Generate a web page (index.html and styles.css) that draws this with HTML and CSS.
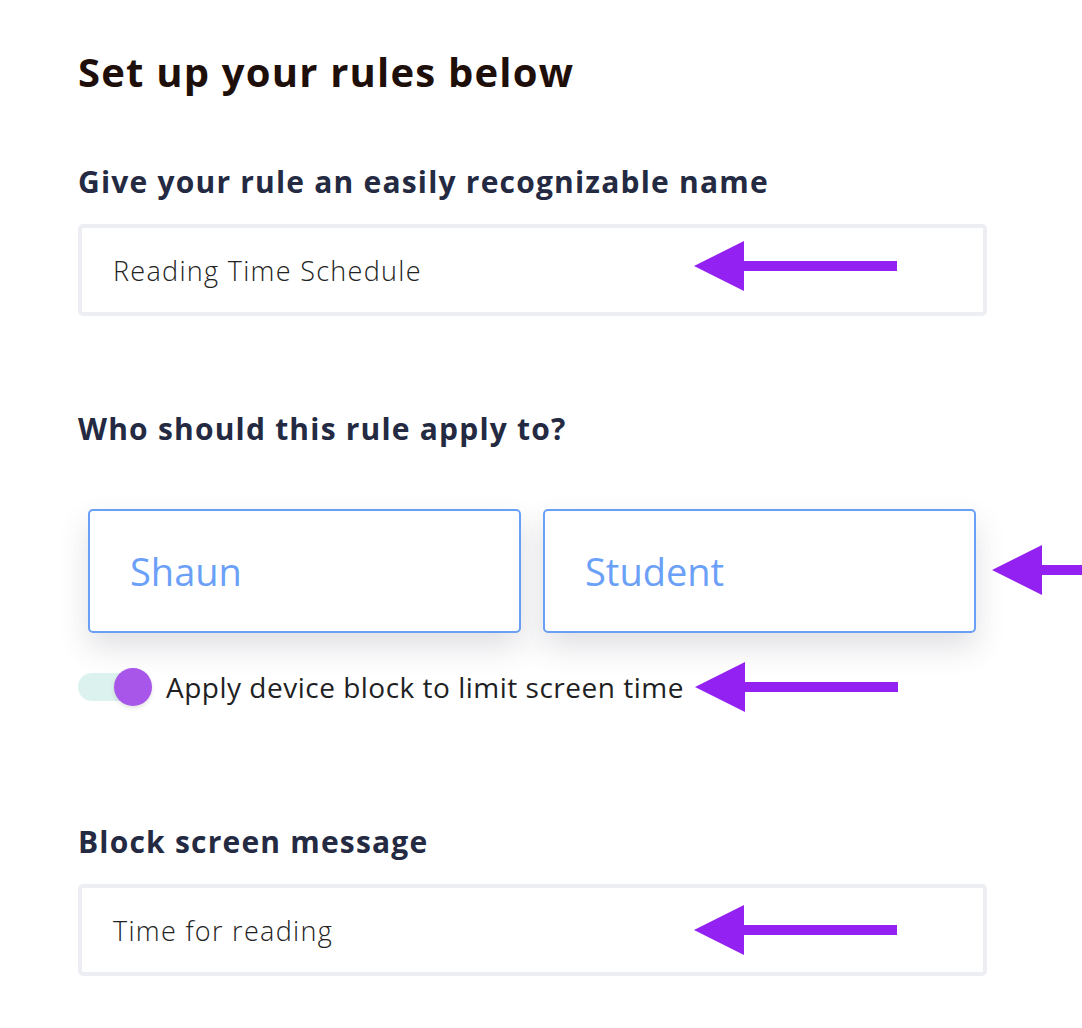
FILE: index.html
```html
<!DOCTYPE html>
<html lang="en">
<head>
<meta charset="utf-8">
<title>Rule setup</title>
<link rel="stylesheet" href="styles.css">
</head>
<body>
<main class="rules">
  <h1 class="rules__title">Set up your rules below</h1>

  <section class="field field--name">
    <h2 class="field__label">Give your rule an easily recognizable name</h2>
    <div class="field__box">
      <span class="field__value">Reading Time Schedule</span>
      <svg class="pointer pointer--name" viewBox="0 0 203 50" aria-hidden="true"><path d="M0 25 L50 0 L50 20 L203 20 L203 30 L50 30 L50 50 Z"/></svg>
    </div>
  </section>

  <section class="field field--who">
    <h2 class="field__label">Who should this rule apply to?</h2>
    <div class="people">
      <div class="person">Shaun</div>
      <div class="person">Student</div>
      <svg class="pointer pointer--edge" viewBox="0 0 90 50" aria-hidden="true"><path d="M0 25 L50 0 L50 20 L90 20 L90 30 L50 30 L50 50 Z"/></svg>
    </div>
    <div class="toggle-row">
      <span class="toggle"><span class="toggle__knob"></span></span>
      <span class="toggle-row__text">Apply device block to limit screen time</span>
      <svg class="pointer pointer--toggle" viewBox="0 0 203 50" aria-hidden="true"><path d="M0 25 L50 0 L50 20 L203 20 L203 30 L50 30 L50 50 Z"/></svg>
    </div>
  </section>

  <section class="field field--message">
    <h2 class="field__label">Block screen message</h2>
    <div class="field__box">
      <span class="field__value">Time for reading</span>
      <svg class="pointer pointer--message" viewBox="0 0 203 50" aria-hidden="true"><path d="M0 25 L50 0 L50 20 L203 20 L203 30 L50 30 L50 50 Z"/></svg>
    </div>
  </section>
</main>
</body>
</html>
```

FILE: styles.css
```css
html, body {
  margin: 0;
  padding: 0;
  background: #ffffff;
}

body {
  font-family: "Open Sans", "Noto Sans", sans-serif;
  overflow: hidden;
}

.rules {
  padding: 44px 0 0 78px;
  width: 909px;
}

.rules__title {
  margin: 0;
  font-size: 40px;
  font-weight: 700;
  letter-spacing: 1.2px;
  color: #1e0f0a;
  line-height: 56px;
}

.field__label {
  margin: 0;
  font-size: 30px;
  font-weight: 700;
  letter-spacing: 1.2px;
  color: #242a42;
  line-height: 40px;
}

.field--name {
  margin-top: 62px;
}

.field--who {
  margin-top: 93px;
}

.field--message {
  margin-top: 115px;
}

.field__box {
  position: relative;
  margin-top: 22px;
  height: 84px;
  border: 4px solid #ededf4;
  border-radius: 5px;
  display: flex;
  align-items: center;
  padding-left: 31px;
}

.field__value {
  font-size: 27px;
  font-weight: 300;
  letter-spacing: 1.3px;
  color: #222222;
}

.pointer {
  position: absolute;
  width: 203px;
  height: 50px;
  fill: #9321f1;
}

.pointer--name {
  left: 612px;
  top: 13px;
}

.pointer--message {
  left: 612px;
  top: 17px;
}

.people {
  position: relative;
  display: flex;
  gap: 22px;
  margin-top: 60px;
  margin-left: 10px;
}

.person {
  box-sizing: border-box;
  flex: 0 0 433px;
  height: 124px;
  border: 2px solid #6a9ff6;
  border-radius: 5px;
  background: #ffffff;
  box-shadow: 0 14px 30px rgba(60, 60, 90, 0.16);
  display: flex;
  align-items: center;
  padding-left: 40px;
  font-size: 38px;
  font-weight: 400;
  color: #6aa0f8;
}

/* the edge pointer is cut off by the window, so only its visible part is drawn */
.pointer--edge {
  left: 904px;
  top: 36px;
  width: 90px;
}

.toggle-row {
  position: relative;
  display: flex;
  align-items: center;
  margin-top: 34px;
  height: 40px;
}

.toggle {
  position: relative;
  width: 62px;
  height: 28px;
  border-radius: 14px;
  background: #dcf2ef;
}

.toggle__knob {
  position: absolute;
  right: -12px;
  top: -5px;
  width: 38px;
  height: 38px;
  border-radius: 50%;
  background: #a855e9;
  box-shadow: 0 2px 4px rgba(0, 0, 0, 0.12);
}

.toggle-row__text {
  margin-left: 26px;
  font-size: 28px;
  font-weight: 400;
  letter-spacing: 0.5px;
  color: #1f1f24;
}

.pointer--toggle {
  left: 617px;
  top: -5px;
}
```
